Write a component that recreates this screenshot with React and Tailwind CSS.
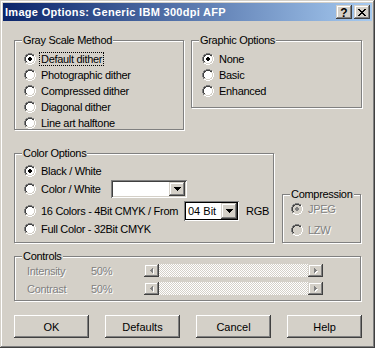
import React from "react";

const RAISED =
  "shadow-[inset_-1px_-1px_0_#404040,inset_1px_1px_0_#ffffff,inset_-2px_-2px_0_#808080,inset_2px_2px_0_#d4d0c8]";
const RAISED_SM =
  "shadow-[inset_-1px_-1px_0_#404040,inset_1px_1px_0_#d4d0c8,inset_-2px_-2px_0_#808080,inset_2px_2px_0_#ffffff]";
const DIS = "text-[#808080] [text-shadow:1px_1px_0_#ffffff]";

const OUT_TL = ["....XXXX....", "..XX....XX..", ".X..........", ".X..........", "X...........", "X...........", "X...........", "X...........", ".X..........", ".X..........", "............", "............"];
const OUT_BR = ["............", "............", "..........X.", "..........X.", "...........X", "...........X", "...........X", "...........X", "..........X.", "..........X.", "..XX....XX..", "....XXXX...."];
const IN_TL = ["............", "....XXXX....", "..XX....XX..", "..X.........", ".X..........", ".X..........", ".X..........", ".X..........", "..X.........", "............", "............", "............"];
const IN_BR = ["............", "............", "............", ".........X..", "..........X.", "..........X.", "..........X.", "..........X.", ".........X..", "..XX....XX..", "....XXXX....", "............"];
const FILL = ["............", "............", "....XXXX....", "...XXXXXX...", "..XXXXXXXX..", "..XXXXXXXX..", "..XXXXXXXX..", "..XXXXXXXX..", "...XXXXXX...", "....XXXX....", "............", "............"];
const DOT = ["", "", "", "", ".....XX.....", "....XXXX....", "....XXXX....", ".....XX....."];
const TRI = ["XXXXXXX", ".XXXXX.", "..XXX..", "...X..."];
const CLOSE = ["XX....XX", ".XX..XX.", "..XXXX..", "...XX...", "..XXXX..", ".XX..XX.", "XX....XX"];
const LEFT = ["..X", ".XX", "XXX", ".XX", "..X"];
const RIGHT = ["X..", "XX.", "XXX", "XX.", "X.."];

function Px({ rows, color, dx = 0, dy = 0 }) {
  const out = [];
  rows.forEach((r, y) => {
    for (let x = 0; x < r.length; x++) {
      if (r[x] === "X")
        out.push(<rect key={x + "-" + y} x={x + dx} y={y + dy} width="1" height="1" fill={color} />);
    }
  });
  return out;
}

function RadioIcon({ checked, disabled }) {
  return (
    <svg width="12" height="12" viewBox="0 0 12 12" shapeRendering="crispEdges" className="shrink-0">
      <Px rows={FILL} color={disabled ? "#d4d0c8" : "#ffffff"} />
      <Px rows={OUT_TL} color="#808080" />
      <Px rows={OUT_BR} color="#ffffff" />
      <Px rows={IN_TL} color="#404040" />
      <Px rows={IN_BR} color="#d4d0c8" />
      {checked && <Px rows={DOT} color={disabled ? "#808080" : "#000000"} />}
    </svg>
  );
}

function Radio({ checked, disabled, focus, children, h = "h-[16px]", labelClass = "", after }) {
  return (
    <div className={`flex items-center ${h}`}>
      <RadioIcon checked={checked} disabled={disabled} />
      <span
        className={`ml-[3px] px-[1px] border leading-[12px] whitespace-nowrap ${
          focus ? "border-dotted border-black" : "border-transparent"
        } ${disabled ? DIS : ""} ${labelClass}`}
      >
        {children}
      </span>
      {after}
    </div>
  );
}

function Group({ label, className = "", children }) {
  return (
    <div className={`relative border border-[#808080] shadow-[inset_1px_1px_0_#ffffff,1px_1px_0_#ffffff] ${className}`}>
      <span className="absolute left-[7px] top-[-8px] bg-[#d4d0c8] px-[1px] leading-[14px] whitespace-nowrap">
        {label}
      </span>
      {children}
    </div>
  );
}

function DropBtn() {
  return (
    <div className={`w-[16px] h-full bg-[#d4d0c8] flex items-center justify-center ${RAISED_SM}`}>
      <svg width="7" height="4" viewBox="0 0 7 4" shapeRendering="crispEdges">
        <Px rows={TRI} color="#000000" />
      </svg>
    </div>
  );
}

function Combo({ className = "", value, dark }) {
  return (
    <div
      className={`flex bg-white p-[2px] ${
        dark
          ? "shadow-[inset_1px_1px_0_#808080,inset_-1px_-1px_0_#ffffff,inset_0_0_0_2px_#000000]"
          : "shadow-[inset_1px_1px_0_#808080,inset_-1px_-1px_0_#ffffff,inset_2px_2px_0_#404040,inset_-2px_-2px_0_#d4d0c8]"
      } ${className}`}
    >
      <div className="flex-1 pl-[2px] flex items-center leading-[12px] tracking-normal">{value}</div>
      <DropBtn />
    </div>
  );
}

function ArrowBtn({ dir }) {
  return (
    <div className={`w-[15px] h-full bg-[#d4d0c8] flex items-center justify-center ${RAISED_SM}`}>
      <svg width="4" height="6" viewBox="0 0 4 6" shapeRendering="crispEdges">
        <Px rows={dir === "left" ? LEFT : RIGHT} color="#ffffff" dx={1} dy={1} />
        <Px rows={dir === "left" ? LEFT : RIGHT} color="#808080" />
      </svg>
    </div>
  );
}

function ScrollBar() {
  return (
    <div className="flex h-[13px] w-[179px]">
      <ArrowBtn dir="left" />
      <div className="flex-1 bg-[repeating-conic-gradient(#d4d0c8_0_25%,#ffffff_0_50%)] bg-[length:2px_2px]" />
      <ArrowBtn dir="right" />
    </div>
  );
}

function PushButton({ children }) {
  return (
    <div className={`w-[75px] h-[23px] bg-[#d4d0c8] flex items-center justify-center leading-[12px] ${RAISED}`}>
      {children}
    </div>
  );
}

export default function App() {
  return (
    <div className="w-[375px] h-[348px] bg-[#d4d0c8] p-[3px] overflow-hidden text-[11px] text-black font-['Liberation_Sans',Arial,sans-serif] shadow-[inset_-1px_-1px_0_#404040,inset_1px_1px_0_#d4d0c8,inset_-2px_-2px_0_#808080,inset_2px_2px_0_#ffffff]">
      {/* Title bar */}
      <div className="h-[18px] flex items-center justify-between pl-[2px] pr-[2px] bg-[linear-gradient(to_right,#0a246a,#a6caf0)]">
        <span className="text-white font-bold tracking-[0.3px] leading-[14px] whitespace-nowrap">
          Image Options: Generic IBM 300dpi AFP
        </span>
        <div className="flex gap-[2px]">
          <div className={`w-[16px] h-[14px] bg-[#d4d0c8] flex items-center justify-center font-bold text-[12px] leading-[12px] pt-[1px] ${RAISED_SM}`}>
            ?
          </div>
          <div className={`w-[16px] h-[14px] bg-[#d4d0c8] flex items-center justify-center ${RAISED_SM}`}>
            <svg width="8" height="7" viewBox="0 0 8 7" shapeRendering="crispEdges">
              <Px rows={CLOSE} color="#000000" />
            </svg>
          </div>
        </div>
      </div>

      {/* Body */}
      <div className="pt-[19px] pl-[11px] tracking-[-0.3px]">
        <div className="flex items-start gap-[7px]">
          <Group label="Gray Scale Method" className="w-[170px] h-[90px] pt-[10px] pl-[9px]">
            <Radio checked focus>Default dither</Radio>
            <Radio>Photographic dither</Radio>
            <Radio>Compressed dither</Radio>
            <Radio>Diagonal dither</Radio>
            <Radio>Line art halftone</Radio>
          </Group>
          <Group label="Graphic Options" className="w-[171px] h-[68px] pt-[10px] pl-[10px]">
            <Radio checked>None</Radio>
            <Radio>Basic</Radio>
            <Radio>Enhanced</Radio>
          </Group>
        </div>

        <div className="flex items-end gap-[8px] mt-[23px]">
          <Group label="Color Options" className="w-[260px] h-[90px] pt-[9px] pl-[9px]">
            <Radio checked>Black / White</Radio>
            <div className="mt-[1px]">
              <Radio h="h-[18px]" labelClass="w-[72px]" after={<Combo className="w-[76px] h-[18px]" value="" />}>
                Color / White
              </Radio>
            </div>
            <div className="mt-[3px]">
              <Radio
                h="h-[20px]"
                labelClass="w-[145px]"
                after={
                  <>
                    <Combo dark className="w-[55px] h-[20px]" value="04 Bit" />
                    <span className="ml-[7px] leading-[12px]">RGB</span>
                  </>
                }
              >
                16 Colors - 4Bit CMYK / From
              </Radio>
            </div>
            <Radio>Full Color - 32Bit CMYK</Radio>
          </Group>
          <Group label="Compression" className="w-[79px] h-[49px] pt-[6px] pl-[8px]">
            <Radio checked disabled>JPEG</Radio>
            <div className="mt-[5px]">
              <Radio disabled>LZW</Radio>
            </div>
          </Group>
        </div>

        <Group label="Controls" className="w-[347px] h-[45px] mt-[13px] pt-[7px] pl-[12px]">
          <div className="flex items-center h-[13px] leading-[12px]">
            <span className={`w-[64px] ${DIS}`}>Intensity</span>
            <span className={`w-[53px] ${DIS}`}>50%</span>
            <ScrollBar />
          </div>
          <div className="flex items-center h-[13px] mt-[5px] leading-[12px]">
            <span className={`w-[64px] ${DIS}`}>Contrast</span>
            <span className={`w-[53px] ${DIS}`}>50%</span>
            <ScrollBar />
          </div>
        </Group>

        <div className="flex justify-between w-[348px] mt-[14px] tracking-normal">
          <PushButton>OK</PushButton>
          <PushButton>Defaults</PushButton>
          <PushButton>Cancel</PushButton>
          <PushButton>Help</PushButton>
        </div>
      </div>
    </div>
  );
}
